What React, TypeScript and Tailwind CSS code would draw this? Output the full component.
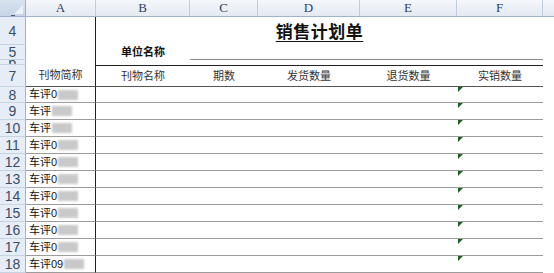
import React from "react";

const font = { fontFamily: '"Liberation Sans", "Noto Sans CJK SC", sans-serif' };

function RowHead({ n, h }: { n: string; h: string }) {
  return (
    <div
      className={`${h} w-[26px] shrink-0 overflow-hidden flex items-center justify-center bg-[#e6edf6] border-r border-r-[#9fb3cc] border-b border-b-[#c6d3e3] text-[14px] leading-none text-[#3b4d66]`}
      style={{ fontFamily: '"Liberation Sans", sans-serif' }}
    >
      {n}
    </div>
  );
}

function ColHead({ l, w }: { l: string; w: string }) {
  return (
    <div
      className={`${w} shrink-0 h-full flex items-center justify-center border-r border-r-[#c2cedd] text-[13px] text-[#2e415c] bg-gradient-to-b from-[#f4f7fb] to-[#e4eaf2]`}
      style={{ fontFamily: '"Liberation Serif", serif' }}
    >
      {l}
    </div>
  );
}

const dataRows = [
  { n: "8", t: "车评0", h: "h-[16px]" },
  { n: "9", t: "车评", h: "h-[17px]" },
  { n: "10", t: "车评", h: "h-[17px]" },
  { n: "11", t: "车评0", h: "h-[17px]" },
  { n: "12", t: "车评0", h: "h-[17px]" },
  { n: "13", t: "车评0", h: "h-[17px]" },
  { n: "14", t: "车评0", h: "h-[17px]" },
  { n: "15", t: "车评0", h: "h-[17px]" },
  { n: "16", t: "车评0", h: "h-[17px]" },
  { n: "17", t: "车评0", h: "h-[17px]" },
  { n: "18", t: "车评09", h: "h-[17px]" },
];

export default function App() {
  return (
    <div className="w-[554px] h-[273px] overflow-hidden bg-white" style={font}>
      {/* column header */}
      <div className="flex h-[17px] border-b border-b-[#9fb3cc]">
        <div className="relative w-[26px] shrink-0 h-full bg-gradient-to-b from-[#d9e3ef] to-[#c6d4e6] border-r border-r-[#9fb3cc]">
          <div className="absolute right-[2px] bottom-[2px] w-0 h-0 border-l-[9px] border-l-transparent border-b-[9px] border-b-[#eef3f9]" />
          <div className="absolute left-[11px] bottom-[0px] w-[4px] h-[1px] bg-[#4b5e78]" />
        </div>
        <ColHead l="A" w="w-[70px]" />
        <ColHead l="B" w="w-[94px]" />
        <ColHead l="C" w="w-[68px]" />
        <ColHead l="D" w="w-[102px]" />
        <ColHead l="E" w="w-[97px]" />
        <ColHead l="F" w="w-[86px]" />
        <div className="flex-1 h-full bg-gradient-to-b from-[#f4f7fb] to-[#e4eaf2]" />
      </div>

      {/* row 4 - title */}
      <div className="flex h-[28px]">
        <RowHead n="4" h="h-[28px]" />
        <div className="w-[70px] shrink-0 border-r border-r-[#222]" />
        <div className="w-[447px] shrink-0 flex items-center justify-center">
          <span
            className="text-[17px] font-bold text-[#111] underline underline-offset-[3px] tracking-[0.5px]"
            style={{ fontFamily: '"Noto Sans CJK SC", sans-serif' }}
          >
            销售计划单
          </span>
        </div>
      </div>

      {/* row 5 */}
      <div className="flex h-[15px]">
        <RowHead n="5" h="h-[15px]" />
        <div className="w-[70px] shrink-0 border-r border-r-[#222]" />
        <div className="w-[94px] shrink-0 flex items-center justify-center text-[11px] font-bold text-[#111] leading-none">
          单位名称
        </div>
        <div className="w-[353px] shrink-0 border-b border-b-[#8a8a8a]" />
      </div>

      {/* row 6 */}
      <div className="flex h-[5px]">
        <RowHead n="6" h="h-[5px]" />
        <div className="w-[70px] shrink-0 border-r border-r-[#222]" />
      </div>

      {/* row 7 - headers */}
      <div className="flex h-[22px]">
        <RowHead n="7" h="h-[22px]" />
        <div className="w-[70px] shrink-0 border-r border-r-[#222] border-b border-b-[#555] flex items-center justify-center text-[11px] text-[#333]">
          刊物简称
        </div>
        <div className="flex w-[447px] shrink-0 border-t border-t-[#222] border-b border-b-[#555] text-[11px] text-[#333]">
          <div className="w-[94px] flex items-center justify-center">刊物名称</div>
          <div className="w-[68px] flex items-center justify-center">期数</div>
          <div className="w-[102px] flex items-center justify-center">发货数量</div>
          <div className="w-[97px] flex items-center justify-center">退货数量</div>
          <div className="w-[86px] flex items-center justify-center">实销数量</div>
        </div>
      </div>

      {/* data rows */}
      {dataRows.map((r) => (
        <div key={r.n} className={`flex ${r.h}`}>
          <RowHead n={r.n} h={r.h} />
          <div className="w-[70px] shrink-0 border-r border-r-[#222] border-b border-b-[#9c9c9c] flex items-center pl-[3px] text-[11px] text-[#111] leading-none overflow-hidden">
            <span>{r.t}</span>
            <span className="inline-block ml-[1px] w-[20px] h-[10px] bg-[#c9c9c9] blur-[1px]" />
          </div>
          <div className="flex w-[447px] shrink-0 border-b border-b-[#9c9c9c]">
            <div className="w-[94px]" />
            <div className="w-[68px]" />
            <div className="w-[102px]" />
            <div className="w-[97px]" />
            <div className="relative w-[86px]">
              <div className="absolute left-[1px] top-0 w-0 h-0 border-t-[5px] border-t-[#1f5f22] border-r-[5px] border-r-transparent" />
            </div>
          </div>
        </div>
      ))}
    </div>
  );
}
